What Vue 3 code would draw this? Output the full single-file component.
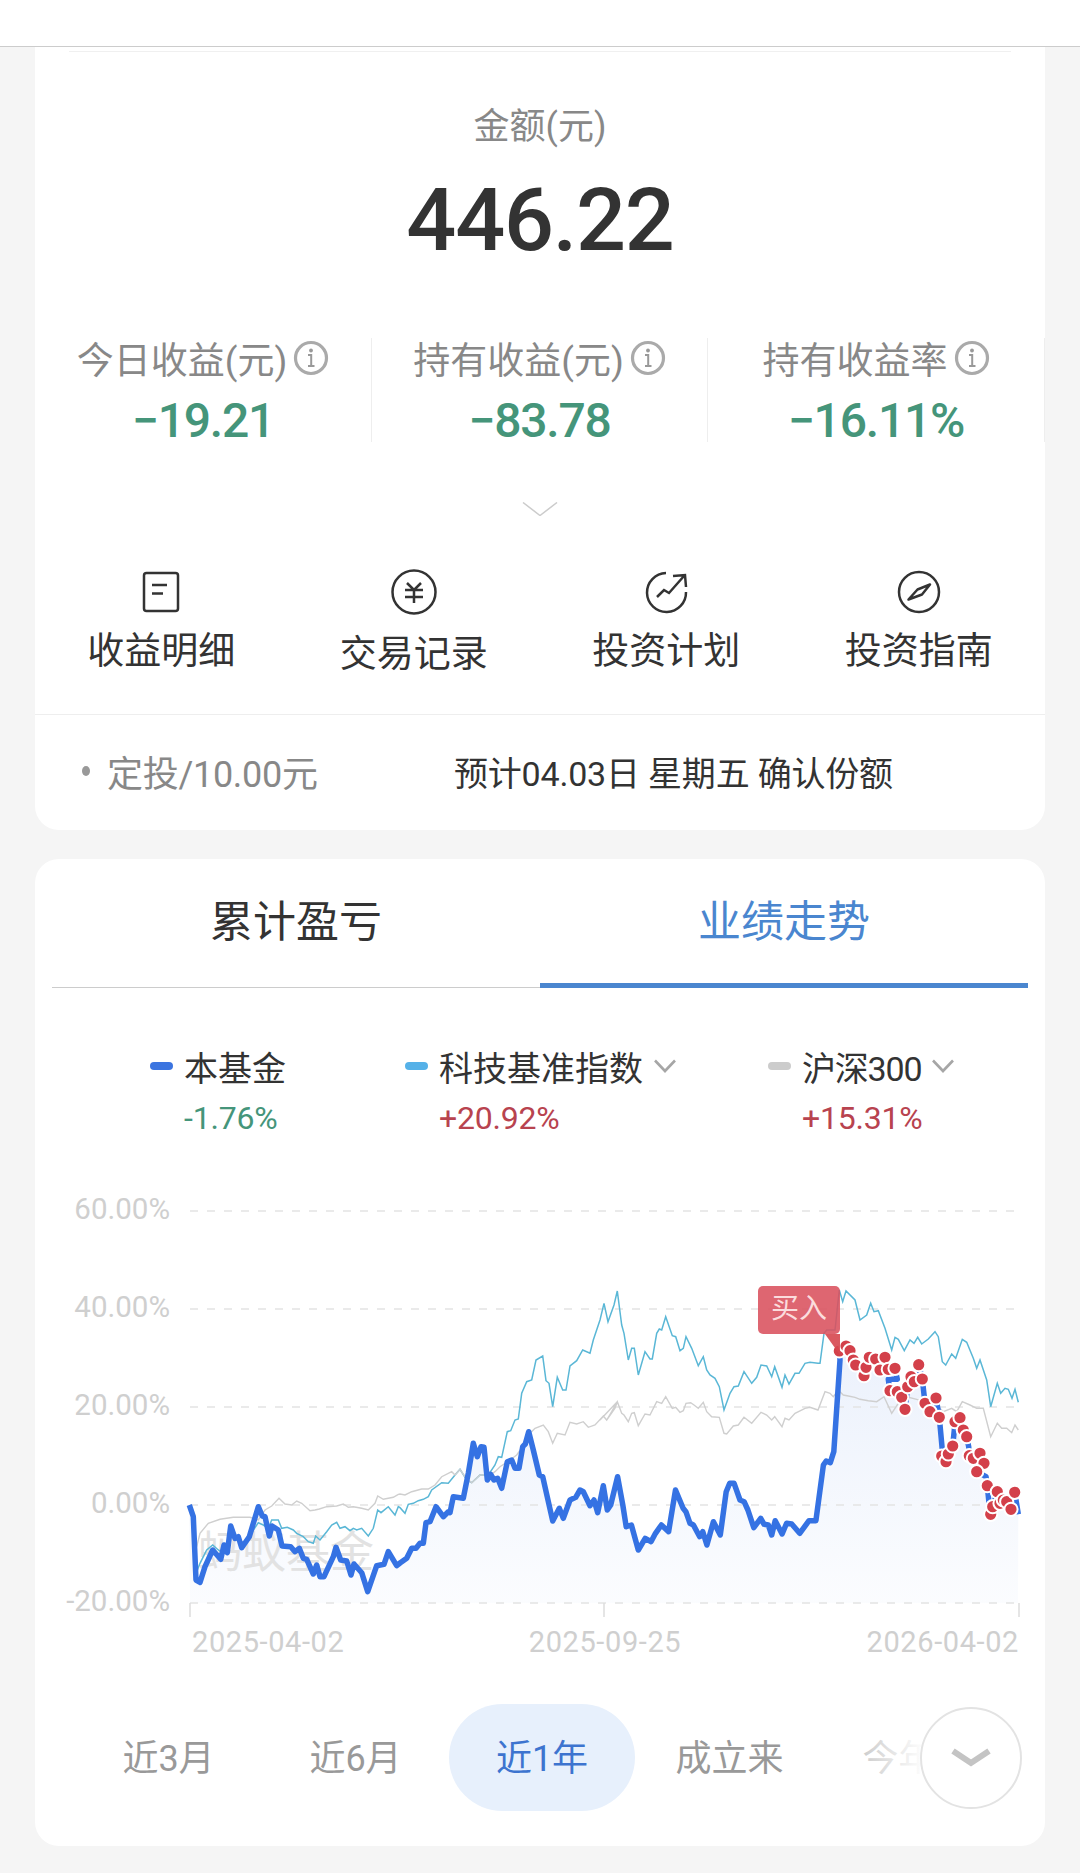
<template>
  <div class="page">
    <header class="topbar"></header>

    <section class="card summary">
      <div class="hairline"></div>
      <div class="amount-label">金额(元)</div>
      <div class="amount">446.22</div>

      <div class="stats">
        <div v-for="s in stats" :key="s.label" class="stat">
          <div class="stat-label">
            <span>{{ s.label }}</span>
            <svg class="info" viewBox="0 0 36 36">
              <circle cx="18" cy="18" r="15.5" fill="none" stroke="#aaa" stroke-width="3.2" />
              <circle cx="18" cy="10.5" r="1.9" fill="#999" />
              <path d="M15 15h3.2v11M15 26h6.5" fill="none" stroke="#999" stroke-width="2" />
            </svg>
          </div>
          <div class="stat-value">{{ s.value }}</div>
        </div>
      </div>

      <svg class="expand" viewBox="0 0 36 14">
        <path d="M1 0.5 18 13.5 35 0.5" fill="none" stroke="#ccc" stroke-width="1.5" />
      </svg>

      <nav class="shortcuts">
        <a class="shortcut">
          <svg viewBox="0 0 48 48">
            <rect x="7" y="5" width="34" height="38" rx="2.5" fill="none" stroke="#333" stroke-width="2.5" />
            <path d="M15 17h15M15 25.500h11" fill="none" stroke="#333" stroke-width="2.500" />
          </svg>
          <span>收益明细</span>
        </a>
        <a class="shortcut">
          <svg viewBox="0 0 48 48">
            <circle cx="24" cy="24" r="21.500" fill="none" stroke="#333" stroke-width="2.500" />
            <path d="M17 15l7 7 7-7M15 22h18M15 29h18M24 22v13" fill="none" stroke="#333" stroke-width="2.500" />
          </svg>
          <span>交易记录</span>
        </a>
        <a class="shortcut">
          <svg viewBox="0 0 48 48">
            <path d="M24 5A19.500 19.500 0 1 0 44 24" fill="none" stroke="#333" stroke-width="2.500" />
            <path d="M15 29l7-7 5 3 15-17M31 8l12-1 1 12" fill="none" stroke="#333" stroke-width="2.500" />
          </svg>
          <span>投资计划</span>
        </a>
        <a class="shortcut">
          <svg viewBox="0 0 48 48">
            <circle cx="24" cy="24" r="20" fill="none" stroke="#333" stroke-width="2.500" />
            <path d="M13.500 31.500 22.500 21.500 35 16.500 27 26.500Z" fill="none" stroke="#333" stroke-width="2.500" stroke-linejoin="round" />
          </svg>
          <span>投资指南</span>
        </a>
      </nav>

      <div class="plan">
        <div class="plan-name"><i></i>定投/10.00元</div>
        <div class="plan-note">预计04.03日 星期五 确认份额</div>
      </div>
    </section>

    <section class="card trend">
      <div class="tabs">
        <div class="tab">累计盈亏</div>
        <div class="tab active">业绩走势</div>
      </div>

      <div class="legend">
        <div v-for="l in legend" :key="l.name" class="legend-item">
          <div class="legend-name">
            <i :style="{ background: l.color }"></i>
            <span>{{ l.name }}</span>
            <svg v-if="l.more" viewBox="0 0 24 14">
              <path d="M2 1.500 12 12 22 1.500" fill="none" stroke="#a6a6a6" stroke-width="2.600" />
            </svg>
          </div>
          <div class="legend-value" :class="l.up ? 'up' : 'down'">{{ l.value }}</div>
        </div>
      </div>

      <svg class="chart" viewBox="35 1143 1010 527">
        <defs>
          <linearGradient id="areaFill" x1="0" y1="0" x2="0" y2="1">
            <stop offset="0" stop-color="#3b74e0" stop-opacity="0.10" />
            <stop offset="1" stop-color="#3b74e0" stop-opacity="0.02" />
          </linearGradient>
        </defs>

        <path :d="areaPath" fill="url(#areaFill)" />
        <text x="198" y="1568" class="watermark">蚂蚁基金</text>

        <line v-for="t in yTicks" :key="t.label" x1="190" x2="1019" :y1="t.y" :y2="t.y" class="grid" />
        <path d="M190 1603v14M604 1603v14M1019 1603v14" stroke="#ddd" stroke-width="1.500" fill="none" />
        <text v-for="t in yTicks" :key="'l' + t.label" x="170" :y="t.y + 8" class="axis" text-anchor="end">{{ t.label }}</text>
        <text x="192" y="1652" class="axis date">2025-04-02</text>
        <text x="605" y="1652" class="axis date" text-anchor="middle">2025-09-25</text>
        <text x="1019" y="1652" class="axis date" text-anchor="end">2026-04-02</text>

        <polyline :points="tealLine" fill="none" stroke="#5ab7d6" stroke-width="1.500" />
        <polyline :points="grayLine" fill="none" stroke="#cfcfcf" stroke-width="1.400" />
        <polyline :points="blueLine" fill="none" stroke="#3572e3" stroke-width="5.500" stroke-linejoin="round" />

        <circle v-for="(d, i) in dots" :key="i" :cx="d[0]" :cy="d[1]" r="6.600" fill="#d3404a" stroke="#fff" stroke-width="2" />

        <path d="M825 1334H840V1355Z" fill="#d6474f" opacity="0.9" />
        <rect x="758" y="1286" width="82" height="48" rx="5" fill="#d9515d" opacity="0.88" />
        <text x="799" y="1318" class="badge" text-anchor="middle">买入</text>
      </svg>

      <div class="ranges">
        <div v-for="r in ranges" :key="r" class="range" :class="{ current: r === '近1年' }">{{ r }}</div>
        <div class="fade"></div>
        <button class="more">
          <svg viewBox="0 0 42 20">
            <path d="M3 3 21 15 39 3" fill="none" stroke="#c4c4c4" stroke-width="6" />
          </svg>
        </button>
      </div>
    </section>
  </div>
</template>

<script setup>
const stats = [
  { label: '今日收益(元)', value: '−19.21' },
  { label: '持有收益(元)', value: '−83.78' },
  { label: '持有收益率', value: '−16.11%' }
]

const legend = [
  { name: '本基金', value: '-1.76%', color: '#3b74e0', up: false, more: false },
  { name: '科技基准指数', value: '+20.92%', color: '#55b1e8', up: true, more: true },
  { name: '沪深300', value: '+15.31%', color: '#cccccc', up: true, more: true }
]

const ranges = ['近3月', '近6月', '近1年', '成立来', '今年来']

const yTicks = [
  { label: '60.00%', y: 1211 },
  { label: '40.00%', y: 1309 },
  { label: '20.00%', y: 1407 },
  { label: '0.00%', y: 1505 },
  { label: '-20.00%', y: 1603 }
]

// curves traced off the screenshot, one chunk per region: ox oy + points at 3x
const trace = (ox, oy, sx, str) =>
  str.trim().split(/\s+/).map((p) => {
    const [x, y] = p.split(',').map(Number)
    return [+(ox + x / sx).toFixed(1), +(oy + y / 3).toFixed(1)]
  })

const toPoints = (pts) => pts.map((p) => p.join(',')).join(' ')

const blue = [
  ...trace(180, 1400, 3, '28,315 40,350 48,540 60,547 75,500 98,450 122,478 132,435 142,458 152,378 165,415 175,410 185,443 208,410 235,320 247,348 255,350 268,408 276,378 295,390 306,438 332,440 345,455 358,445 370,475 380,478 400,522 410,495 420,530 432,530 460,470 468,442 482,480 500,483 513,525 522,492 545,518 563,575 590,497 612,493 625,455 650,497'),
  ...trace(400, 1340, 3, '0,669 20,655 35,625 48,625 60,610 70,610 78,548 90,545 108,500 130,530 145,515 150,518 160,470 190,475 205,400 220,310 232,350 243,320 252,322 262,420 272,403 282,420 293,415 305,445 322,365 335,360 345,385 357,385 368,320 376,312 386,275 400,330 418,405 428,410 458,543 478,505 490,535 510,480 527,472 540,450 550,455 570,497 582,480 593,518 610,437 622,510 632,495'),
  ...trace(540, 1150, 2.9, '225,980 240,1065 250,1130 265,1125 285,1200 305,1165 322,1175 335,1150 352,1125 373,1145 393,1020 415,1075 423,1085 435,1120 445,1125 463,1160 472,1145 484,1185 503,1115 523,1155 540,1025 550,1000 563,1000 580,1050 592,1055 603,1080 620,1133 640,1105 650,1123 662,1125 672,1155 682,1112 702,1152 715,1120 730,1122 753,1150 780,1112 800,1112 822,945 830,933 842,938 852,905 870,630'),
  ...trace(810, 1280, 3, '88,213 108,198 120,212 130,240 137,255 162,287 168,262 178,232 197,237 225,232 210,270 235,268 255,265 262,298 235,298 240,332 262,335 275,352 285,388 293,320 303,290 313,305 326,254 337,297 345,370 360,395 378,354 388,412 397,510 395,528 408,545 415,522 428,498 433,450 435,425 450,413 460,450 470,470 476,500 478,527 490,535 510,520 522,550 500,575 528,590 532,617 536,660 542,703 548,680 562,635 570,670 580,660 590,665 603,688 614,637 625,703')
]

const blueLine = toPoints(blue)
const areaPath = `M${blue[0].join(' ')} L${blue.slice(1).map((p) => p.join(' ')).join(' L')} L1018 1603 L190 1603 Z`

const tealLine = toPoints([
  ...trace(180, 1400, 3, '50,515 60,490 80,450 98,435 115,450 130,460 142,445 152,405 165,415 185,435 210,405 235,368 250,375 265,385 275,360 295,360 305,385 322,382 340,390 350,400 370,410 385,425 400,430 407,408 420,420 440,395 455,375 470,367 480,385 495,380 510,392 520,385 530,390 545,385 565,408 580,385 593,330 603,338 625,320 645,345 655,320'),
  ...trace(400, 1340, 3, '0,503 15,520 25,493 40,490 55,482 70,478 85,470 95,450 125,428 145,430 165,405 180,388 200,420 215,428 240,405 265,405 285,375 295,350 305,352 322,275 332,272 345,240 355,237 365,160 380,125 395,120 408,60 428,48 438,122 447,130 458,200 472,112 488,150 498,150 510,78 530,62 548,30 570,40 580,0'),
  ...trace(600, 1280, 3, '0,120 12,70 24,125 42,75 52,33 65,135 72,160 85,240 95,205 103,205 115,285 135,215 150,237 157,237 170,160 178,147 185,150 197,110 217,167 227,170 240,212 250,205 258,170 275,205 295,257 310,230 320,270 330,285 345,295 358,320 372,390 390,340 402,320 415,318 432,275 455,310 470,292 483,255 500,258 515,290 524,260 546,322 555,285 567,312 585,280 597,280 615,250 630,247'),
  ...trace(810, 1280, 3, '24,250 30,250 42,160 50,150 75,150 88,30 98,65 108,33 135,60 150,120 170,105 182,70 192,95 205,92 225,145 245,210 255,172 265,178 283,212 300,180 312,190 323,172 335,192 355,177 375,155 385,170 397,245 407,255 425,222 437,235 457,178 470,187 490,235 500,265 510,240 530,300 542,380 562,310 572,340 585,325 595,328 606,355 615,328 625,367')
])

const grayLine = toPoints([
  ...trace(180, 1400, 3, '50,440 60,400 85,370 120,358 160,352 210,352 235,360 255,330 275,318 297,295 315,312 335,315 350,303 365,310 390,332 405,330 418,327 440,320 470,318 490,312 505,322 520,320 545,325 565,330 585,310 593,288 610,298 640,292 655,283'),
  ...trace(400, 1340, 3, '0,462 15,465 35,455 65,447 85,447 105,435 125,410 155,395 165,405 180,388 195,410 215,428 240,405 270,405 285,395 300,380 330,360 350,345 375,310 385,285 405,265 430,255 445,275 458,310 472,280 495,285 510,247 530,252 550,245 565,262 585,255 610,228 620,240 645,205 652,185'),
  ...trace(600, 1280, 3, '0,420 10,408 20,420 35,395 52,365 65,400 72,405 85,425 95,400 103,398 115,437 135,402 150,405 170,365 185,370 197,350 217,385 227,382 240,397 250,392 258,370 272,368 282,375 295,385 310,367 320,395 335,410 358,412 372,460 380,462 400,438 415,435 432,412 455,430 483,397 500,405 515,420 524,410 546,440 555,415 567,420 585,400 615,385 630,382'),
  ...trace(810, 1280, 3, '24,390 45,335 60,340 70,350 85,330 100,345 115,348 135,352 150,358 175,362 200,365 222,350 245,400 265,370 290,350 320,358 345,365 385,380 400,395 425,385 440,395 457,365 480,375 500,385 520,385 542,470 562,430 575,445 590,445 605,458 615,435 625,450')
])

const dots = trace(810, 1280, 3, '88,213 108,198 120,212 130,240 137,255 162,287 168,262 178,232 197,237 225,232 210,270 235,268 255,265 240,332 262,335 275,352 285,388 293,320 303,290 313,305 326,254 337,297 345,370 360,395 378,354 388,412 395,528 408,545 415,522 428,498 435,425 450,413 460,450 470,470 478,527 490,535 510,520 522,550 500,575 532,617 542,703 548,680 562,635 570,670 580,660 590,665 603,688 614,637')
</script>

<style>
html,
body {
  margin: 0;
  background: #f5f5f5;
}
</style>

<style scoped>
.page {
  width: 1080px;
  height: 1873px;
  overflow: hidden;
  background: #f5f5f5;
  font-family: Roboto, "Noto Sans CJK SC", sans-serif;
  color: #333;
}

.topbar {
  height: 46px;
  background: #fff;
  border-bottom: 1px solid #ccc;
}

.card {
  margin: 0 35px;
  background: #fff;
  border-radius: 24px;
}

.summary {
  border-radius: 0 0 24px 24px;
  height: 783px;
}

.hairline {
  height: 1px;
  margin: 0 34px;
  position: relative;
  top: 4px;
  background: #f0f0f0;
}

.amount-label {
  margin-top: 54px;
  height: 50px;
  line-height: 50px;
  text-align: center;
  font-size: 36px;
  color: #888;
}

.amount {
  margin-top: 18px;
  height: 100px;
  line-height: 100px;
  text-align: center;
  font-size: 88px;
  font-weight: 500;
  letter-spacing: -1.2px;
  color: #333;
}

.stats {
  margin-top: 68px;
  display: grid;
  grid-template-columns: 337px 336px 337px;
}

.stat {
  height: 104px;
  border-right: 1px solid #eee;
}

.stat-label {
  display: flex;
  align-items: center;
  justify-content: center;
  gap: 6px;
  height: 40px;
  font-size: 37px;
  color: #888;
}

.info {
  width: 36px;
  height: 36px;
}

.stat-value {
  margin-top: 15px;
  line-height: 56px;
  text-align: center;
  font-size: 48px;
  font-weight: 500;
  letter-spacing: -1.2px;
  color: #45957a;
}

.expand {
  display: block;
  width: 36px;
  height: 14px;
  margin: 60px auto 0;
}

.shortcuts {
  margin-top: 52px;
  display: grid;
  grid-template-columns: repeat(4, 1fr);
}

.shortcut {
  display: flex;
  flex-direction: column;
  align-items: center;
  font-size: 37px;
  color: #333;
}

.shortcut svg {
  width: 48px;
  height: 48px;
}

.shortcut span {
  margin-top: 11px;
  line-height: 50px;
}

.shortcut:nth-child(2) span {
  margin-top: 14px;
}

.plan {
  margin-top: 34px;
  height: 118px;
  box-sizing: border-box;
  border-top: 1px solid #eee;
  padding: 0 0 5px 47px;
  display: grid;
  grid-template-columns: 372px 1fr;
  align-items: center;
}

.plan-name {
  display: flex;
  align-items: center;
  font-size: 36px;
  letter-spacing: -0.3px;
  color: #888;
}

.plan-name i {
  width: 8px;
  height: 10px;
  margin-right: 17px;
  border-radius: 50%;
  background: #999;
}

.plan-note {
  font-size: 34px;
  letter-spacing: -0.2px;
  color: #333;
}

.trend {
  margin-top: 29px;
  height: 987px;
}

.tabs {
  margin: 0 17px;
  display: grid;
  grid-template-columns: 488px 488px;
}

.tab {
  height: 129px;
  box-sizing: border-box;
  padding-top: 33px;
  line-height: 60px;
  text-align: center;
  font-size: 43px;
  color: #333;
  border-bottom: 1px solid #ccc;
}

.tab.active {
  color: #4a86cf;
  border-bottom: 5px solid #4a86cf;
}

.legend {
  margin-top: 53px;
  padding-left: 115px;
  display: grid;
  grid-template-columns: 255px 363px auto;
}

.legend-name {
  display: flex;
  align-items: center;
  height: 50px;
  font-size: 34px;
  color: #333;
}

.legend-item:nth-child(3) .legend-name span {
  letter-spacing: -1.2px;
}

.legend-name i {
  width: 23px;
  height: 8px;
  margin-right: 11px;
  border-radius: 4px;
}

.legend-name svg {
  width: 24px;
  height: 14px;
  margin-left: 10px;
}

.legend-value {
  margin-top: 2px;
  padding-left: 34px;
  line-height: 50px;
  font-size: 32px;
  letter-spacing: -0.2px;
}

.legend-value.up {
  color: #b8434f;
}

.legend-value.down {
  color: #45957a;
}

.chart {
  display: block;
  width: 1010px;
  height: 527px;
}

.grid {
  stroke: #e4e4e4;
  stroke-width: 1.5;
  stroke-dasharray: 8 9;
}

.axis {
  font-size: 29.5px;
  fill: #cfcfcf;
}

.date {
  font-size: 29px;
  letter-spacing: 0.6px;
}

.watermark {
  font-size: 44px;
  fill: #e2e2e2;
}

.badge {
  font-size: 28px;
  fill: #fbdcdd;
}

.ranges {
  position: relative;
  margin-top: 34px;
  height: 107px;
  padding-left: 40px;
  display: flex;
  overflow: hidden;
  border-radius: 0 0 24px 24px;
}

.range {
  flex: 0 0 187px;
  line-height: 110px;
  text-align: center;
  font-size: 36px;
  color: #999;
}

.range.current {
  flex-basis: 186px;
  margin: 0 1px 0 0;
  border-radius: 54px;
  background: #e7f0fc;
  color: #3d74cf;
}

.fade {
  position: absolute;
  top: 0;
  bottom: 0;
  left: 820px;
  width: 70px;
  background: linear-gradient(to right, rgba(255, 255, 255, 0.45), #fff);
}

.more {
  position: absolute;
  top: 3px;
  left: 885px;
  width: 102px;
  height: 102px;
  padding: 0;
  box-sizing: border-box;
  border: 2px solid #e3e3e3;
  border-radius: 50%;
  background: #fff;
  display: flex;
  align-items: center;
  justify-content: center;
}

.more svg {
  width: 42px;
  height: 20px;
}
</style>
